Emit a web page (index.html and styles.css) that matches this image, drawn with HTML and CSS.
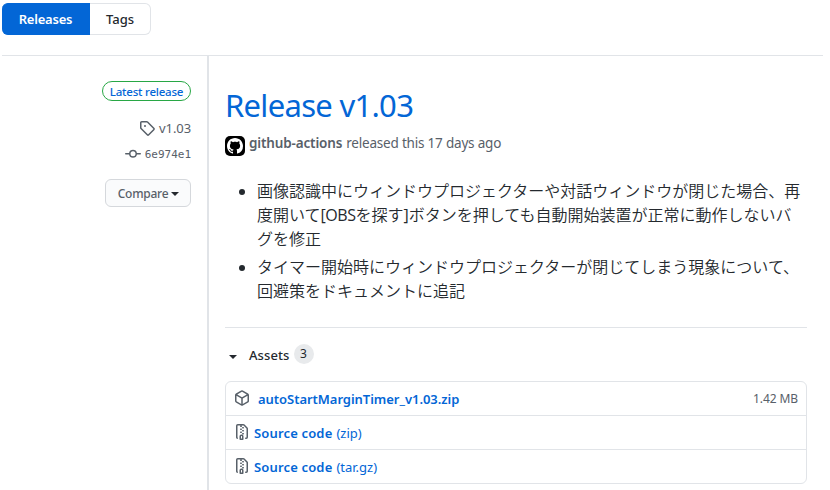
FILE: index.html
```html
<!DOCTYPE html>
<html lang="ja">
<head>
<meta charset="utf-8">
<title>Releases</title>
<link rel="stylesheet" href="styles.css">
</head>
<body>
<nav class="tabs"><a class="tab selected"><span class="t-rel">Releases</span></a><a class="tab"><span class="t-tags">Tags</span></a></nav>
<div class="release">
  <aside class="side">
    <span class="latest"><span class="t-latest">Latest release</span></span>
    <div class="meta tagline">
      <svg width="16" height="16" viewBox="0 0 16 16"><path fill-rule="evenodd" d="M2.5 7.775V2.75a.25.25 0 01.25-.25h5.025a.25.25 0 01.177.073l6.25 6.25a.25.25 0 010 .354l-5.025 5.025a.25.25 0 01-.354 0l-6.25-6.25a.25.25 0 01-.073-.177zm-1.5 0V2.75C1 1.784 1.784 1 2.75 1h5.025c.464 0 .91.184 1.238.513l6.25 6.25a1.75 1.75 0 010 2.474l-5.026 5.026a1.75 1.75 0 01-2.474 0l-6.25-6.25A1.75 1.75 0 011 7.775zM6 5a1 1 0 100 2 1 1 0 000-2z"/></svg>
      <span class="t-ver">v1.03</span>
    </div>
    <div class="meta commit">
      <svg width="16" height="16" viewBox="0 0 16 16"><path fill-rule="evenodd" d="M10.5 7.75a2.5 2.5 0 11-5 0 2.5 2.5 0 015 0zm1.43.75a4.002 4.002 0 01-7.86 0H.75a.75.75 0 110-1.5h3.32a4.001 4.001 0 017.86 0h3.32a.75.75 0 110 1.5h-3.32z"/></svg>
      <span class="t-sha">6e974e1</span>
    </div>
    <button class="compare"><span class="t-comp">Compare</span><i class="caret"></i></button>
  </aside>
  <main class="main">
    <h1><span class="t-title">Release v1.03</span></h1>
    <p class="byline">
      <svg class="avatar" width="20" height="20" viewBox="0 0 20 20"><rect width="20" height="20" rx="5" fill="#000"/><path transform="translate(2 2)" fill="#fff" d="M8 0C3.58 0 0 3.58 0 8c0 3.54 2.29 6.53 5.47 7.59.4.07.55-.17.55-.38 0-.19-.01-.82-.01-1.49-2.01.37-2.53-.49-2.69-.94-.09-.23-.48-.94-.82-1.13-.28-.15-.68-.52-.01-.53.63-.01 1.08.58 1.23.82.72 1.21 1.87.87 2.33.66.07-.52.28-.87.51-1.07-1.78-.2-3.64-.89-3.64-3.95 0-.87.31-1.59.82-2.15-.08-.2-.36-1.02.08-2.12 0 0 .67-.21 2.2.82.64-.18 1.32-.27 2-.27.68 0 1.36.09 2 .27 1.53-1.04 2.2-.82 2.2-.82.44 1.1.16 1.92.08 2.12.51.56.82 1.27.82 2.15 0 3.07-1.87 3.75-3.65 3.95.29.25.54.73.54 1.48 0 1.07-.01 1.93-.01 2.2 0 .21.15.46.55.38A8.013 8.013 0 0016 8c0-4.42-3.58-8-8-8z"/></svg>
      <b class="t-author">github-actions</b><span class="t-when">released this 17 days ago</span>
    </p>
    <ul class="notes">
      <li>画像認識中にウィンドウプロジェクターや対話ウィンドウが閉じた場合、再<br>度開いて<span class="t-obs">[OBS</span>を探す<span class="t-br">]</span>ボタンを押しても自動開始装置が正常に動作しないバ<br>グを修正</li>
      <li>タイマー開始時にウィンドウプロジェクターが閉じてしまう現象について、<br>回避策をドキュメントに追記</li>
    </ul>
    <section class="assets">
      <div class="summary"><i class="caret"></i><span class="t-assets">Assets</span><span class="counter">3</span></div>
      <div class="box">
        <div class="row">
          <svg width="16" height="16" viewBox="0 0 16 16"><path fill-rule="evenodd" d="M8.878.392a1.75 1.75 0 00-1.756 0l-5.25 3.045A1.75 1.75 0 001 4.951v6.098c0 .624.332 1.2.872 1.514l5.25 3.045a1.75 1.75 0 001.756 0l5.25-3.045c.54-.313.872-.89.872-1.514V4.951c0-.624-.332-1.2-.872-1.514L8.878.392zM7.875 1.69a.25.25 0 01.25 0l4.63 2.685L8 7.133 3.245 4.375l4.63-2.685zM2.5 5.677v5.372c0 .09.047.171.125.216l4.625 2.683V8.432L2.5 5.677zm6.25 8.271l4.625-2.683a.25.25 0 00.125-.216V5.677L8.75 8.432v5.516z"/></svg>
          <a class="file"><b class="t-file">autoStartMarginTimer_v1.03.zip</b></a>
          <span class="size"><span class="t-size">1.42 MB</span></span>
        </div>
        <div class="row source">
          <svg width="16" height="16" viewBox="0 0 16 16"><path fill-rule="evenodd" d="M3.5 1.75a.25.25 0 01.25-.25h3a.75.75 0 000 1.5h.5a.75.75 0 000-1.5h2.086a.25.25 0 01.177.073l2.914 2.914a.25.25 0 01.073.177v8.586a.25.25 0 01-.25.25h-.5a.75.75 0 000 1.5h.5A1.75 1.75 0 0014 13.25V4.664c0-.464-.184-.909-.513-1.237L10.573.513A1.75 1.75 0 009.336 0H3.75A1.75 1.75 0 002 1.75v11.5c0 .649.353 1.214.874 1.515a.75.75 0 10.752-1.298.25.25 0 01-.126-.217V1.75zM8.75 3a.75.75 0 000 1.5h.5a.75.75 0 000-1.5h-.5zM6 5.25a.75.75 0 01.75-.75h.5a.75.75 0 010 1.5h-.5A.75.75 0 016 5.25zm2 1.5A.75.75 0 018.75 6h.5a.75.75 0 010 1.5h-.5A.75.75 0 018 6.75zm-1.25.75a.75.75 0 000 1.5h.5a.75.75 0 000-1.5h-.5zM8 9.75A.75.75 0 018.75 9h.5a.75.75 0 010 1.5h-.5A.75.75 0 018 9.75zm-.75.75a1.75 1.75 0 00-1.75 1.75v3c0 .414.336.75.75.75h2.5a.75.75 0 00.75-.75v-3a1.75 1.75 0 00-1.75-1.75h-.5zM7 12.25a.25.25 0 01.25-.25h.5a.25.25 0 01.25.25v2.25H7v-2.25z"/></svg>
          <a class="file"><b class="t-src">Source code</b><span class="t-zip">(zip)</span></a>
        </div>
        <div class="row source">
          <svg width="16" height="16" viewBox="0 0 16 16"><path fill-rule="evenodd" d="M3.5 1.75a.25.25 0 01.25-.25h3a.75.75 0 000 1.5h.5a.75.75 0 000-1.5h2.086a.25.25 0 01.177.073l2.914 2.914a.25.25 0 01.073.177v8.586a.25.25 0 01-.25.25h-.5a.75.75 0 000 1.5h.5A1.75 1.75 0 0014 13.25V4.664c0-.464-.184-.909-.513-1.237L10.573.513A1.75 1.75 0 009.336 0H3.75A1.75 1.75 0 002 1.75v11.5c0 .649.353 1.214.874 1.515a.75.75 0 10.752-1.298.25.25 0 01-.126-.217V1.75zM8.75 3a.75.75 0 000 1.5h.5a.75.75 0 000-1.5h-.5zM6 5.25a.75.75 0 01.75-.75h.5a.75.75 0 010 1.5h-.5A.75.75 0 016 5.25zm2 1.5A.75.75 0 018.75 6h.5a.75.75 0 010 1.5h-.5A.75.75 0 018 6.75zm-1.25.75a.75.75 0 000 1.5h.5a.75.75 0 000-1.5h-.5zM8 9.75A.75.75 0 018.75 9h.5a.75.75 0 010 1.5h-.5A.75.75 0 018 9.75zm-.75.75a1.75 1.75 0 00-1.75 1.75v3c0 .414.336.75.75.75h2.5a.75.75 0 00.75-.75v-3a1.75 1.75 0 00-1.75-1.75h-.5zM7 12.25a.25.25 0 01.25-.25h.5a.25.25 0 01.25.25v2.25H7v-2.25z"/></svg>
          <a class="file"><b class="t-src">Source code</b><span class="t-tar">(tar.gz)</span></a>
        </div>
      </div>
    </section>
  </main>
</div>
</body>
</html>
```

FILE: styles.css
```css
* { box-sizing: border-box; }
body { margin: 0; padding: 3px 7px 0 2px; height: 490px; overflow: hidden; background: #fff; color: #24292e; font: 13.5px/20px "Noto Sans", "Noto Sans CJK JP", sans-serif; }
svg { fill: #586069; flex: none; display: block; }
b { font-weight: 600; }
span, b { white-space: nowrap; }
.tabs { display: flex; height: 32px; }
.tab { display: flex; align-items: center; justify-content: center; width: 61px; border: 1px solid #e1e4e8; border-left: 0; border-radius: 0 6px 6px 0; font-weight: 500; font-size: 13px; }
.tab.selected { width: 88px; background: #0366d6; border-color: #0366d6; color: #fff; border-radius: 6px 0 0 6px; font-weight: 600; }
.t-rel { letter-spacing: -.2px; }
.release { display: flex; margin-top: 20px; border-top: 1px solid #e1e4e8; height: 435px; }
.side { width: 205px; padding: 25px 16px 0 0; display: flex; flex-direction: column; align-items: flex-end; }
.latest { width: 89px; height: 20px; border: 1px solid #28a745; border-radius: 10px; color: #0366d6; font-size: 11.5px; line-height: 19px; font-weight: 500; text-align: center; letter-spacing: -.22px; }
.meta { display: flex; align-items: center; color: #586069; }
.tagline { margin-top: 17px; gap: 4px; height: 20px; font-size: 13px; }
.t-ver { letter-spacing: -.1px; }
.commit { margin-top: 6px; gap: 4px; height: 20px; font: 11px/20px "DejaVu Sans Mono", monospace; }
.t-sha { margin-top: 2px; }
.compare { margin-top: 15px; width: 86px; height: 28px; padding: 0; display: flex; align-items: center; justify-content: center; gap: 3px; border: 1px solid #d5d8dc; border-radius: 6px; background: #fafbfc; color: #586069; font: 500 12px/20px "Noto Sans", sans-serif; }
.t-comp { letter-spacing: -.25px; margin: 2px 0 0 1px; }
.caret { width: 0; height: 0; border: 4px solid transparent; border-top-color: #24292e; border-bottom: 0; }
.compare .caret { margin-top: 1px; }
.summary .caret { margin-top: 4px; }
.main { flex: 1; border-left: 2px solid #e1e4e8; padding: 25px 16px 0 16px; }
h1 { margin: 0; height: 48px; font-size: 31px; line-height: 48px; font-weight: 400; color: #0366d6; letter-spacing: -.7px; }
.byline { margin: 5px 0 0; height: 20px; display: flex; align-items: center; gap: 4px; color: #586069; }
.byline b, .byline span { margin-top: -2px; }
.t-author { letter-spacing: -.15px; }
.t-when { letter-spacing: -.2px; }
.avatar { margin-top: 3px; }
.notes { margin: 25px 0 0; padding: 0 0 0 32px; font: 350 16px/24px "Open Sans", "Noto Sans CJK JP", sans-serif; white-space: nowrap; }
.t-obs { font-weight: 400; letter-spacing: -.45px; }
.t-br { font-weight: 400; }
.notes li + li { margin-top: 4px; }
.assets { margin-top: 24px; border-top: 1px solid #e1e4e8; }
.summary { display: flex; align-items: center; height: 20px; margin-top: 17px; padding-left: 4px; }
.summary .t-assets { margin: 0 4px 0 12px; font-weight: 500; font-size: 13px; letter-spacing: .1px; }
.counter { width: 20px; height: 20px; border-radius: 10px; background: #e8eaec; text-align: center; font-size: 12px; line-height: 20px; margin-top: -2px; }
.box { margin-top: 16px; border: 1px solid #e1e4e8; border-radius: 6px; }
.row { display: flex; align-items: center; height: 33px; padding: 0 8px; }
.row + .row { height: 34px; border-top: 1px solid #e1e4e8; }
.row:first-child svg { margin-top: -1px; }
.file { display: flex; gap: 4px; margin: 1px 0 0 8px; color: #0366d6; font-size: 13px; }
.t-file { letter-spacing: -.04px; }
.t-src { letter-spacing: .16px; }
.source .file { margin: 0 0 0 4px; }
.source svg { margin-top: -1px; }
.size { margin: 1px 0 0 auto; color: #586069; font-size: 12px; letter-spacing: -.1px; }
```
